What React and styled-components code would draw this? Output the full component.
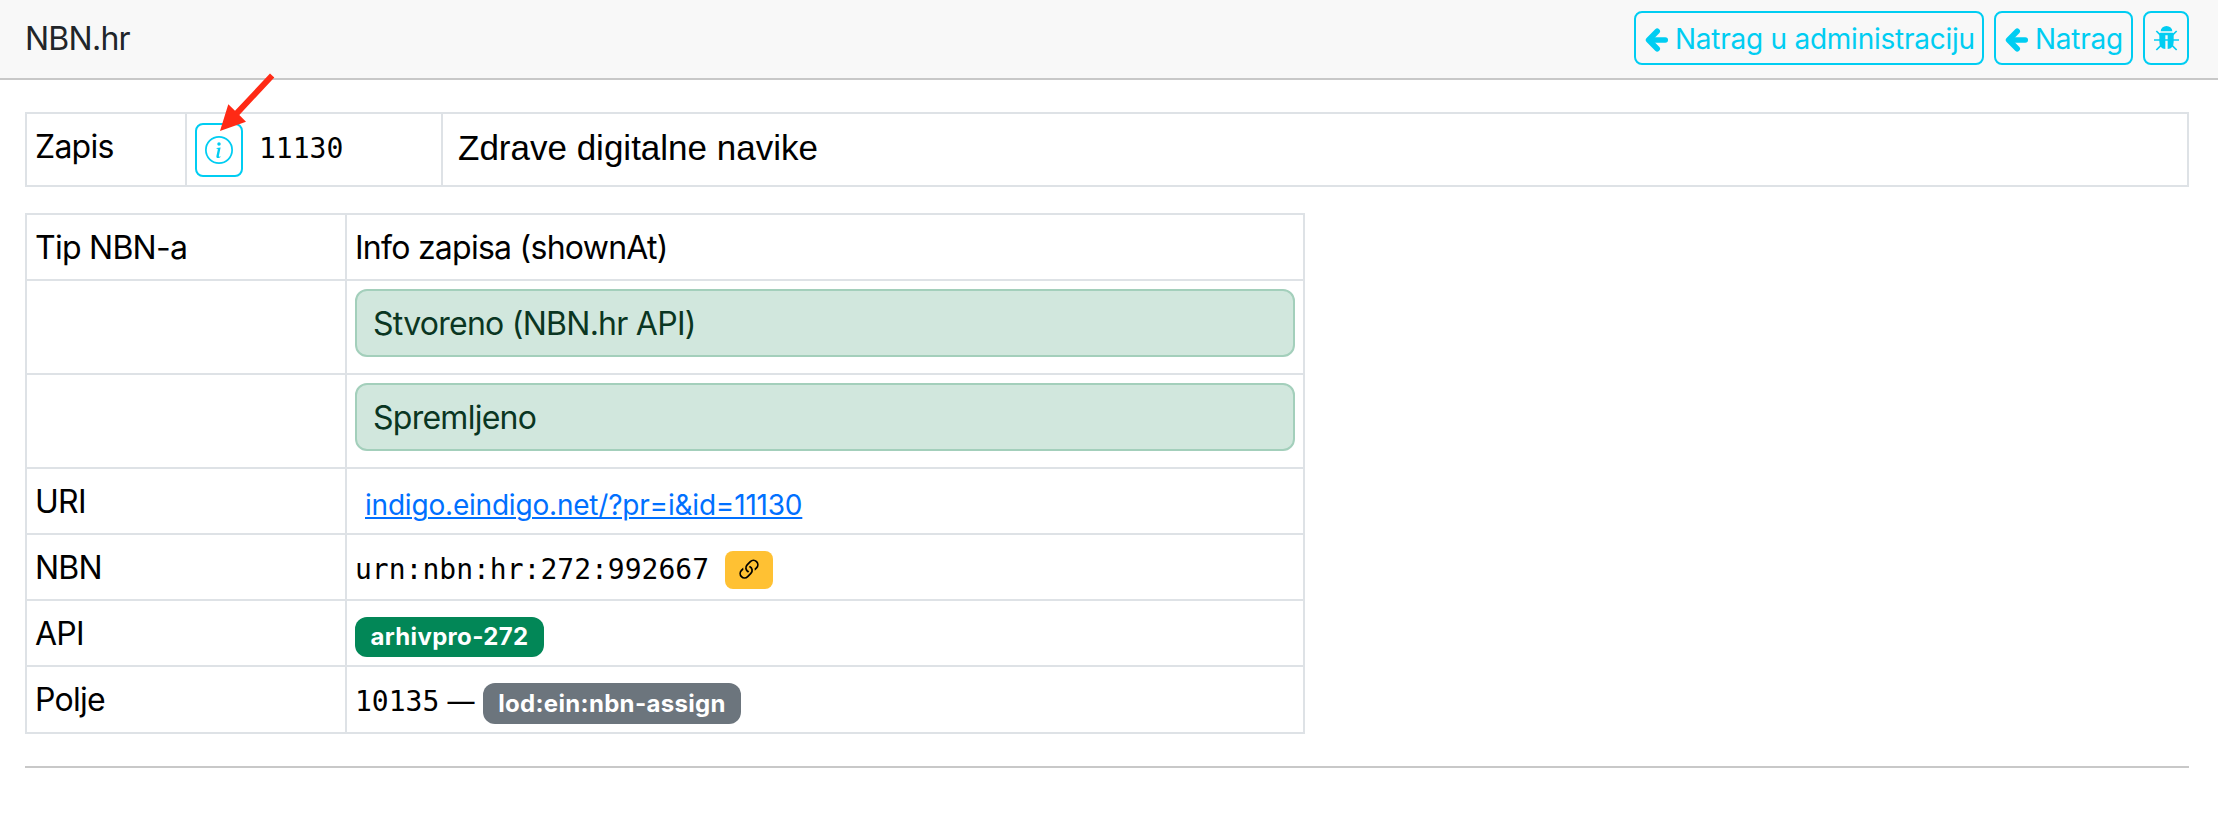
import React from "react";
import styled, { createGlobalStyle } from "styled-components";
import { BsInfoCircle, BsLink45Deg } from "react-icons/bs";

const theme = {
  cyan: "#00cdf2",
  border: "#dee2e6",
  green: "#028757",
  gray: "#6c757d",
};

const GlobalStyle = createGlobalStyle`
  * {
    box-sizing: border-box;
  }

  body {
    margin: 0;
    background: #fff;
    color: #000;
    font-family: Inter, "Liberation Sans", sans-serif;
    font-size: 32px;
    line-height: 50px;
    letter-spacing: -0.74px;
  }
`;

const Header = styled.header`
  display: flex;
  justify-content: space-between;
  align-items: center;
  height: 80px;
  padding: 0 29px 2px 25px;
  background: #f8f8f8;
  border-bottom: 2px solid #c8c8c8;
`;

const Brand = styled.div`
  padding-top: 2px;
  color: #212529;
`;

const Buttons = styled.div`
  display: flex;
  gap: 10px;
`;

const OutlineButton = styled.button`
  display: flex;
  justify-content: ${(props) => (props.$icon ? "center" : "flex-start")};
  align-items: center;
  gap: 6px;
  width: ${(props) => props.$width}px;
  height: 54px;
  padding: ${(props) => (props.$icon ? "0" : "0 0 0 9px")};
  border: 2px solid ${theme.cyan};
  border-radius: 8px;
  background: transparent;
  color: ${theme.cyan};
  font: 28px Inter, sans-serif;
  letter-spacing: -0.25px;
  white-space: nowrap;
`;

const ButtonText = styled.span`
  line-height: 28px;
  padding-top: 1px;
`;

const ArrowIcon = styled.svg`
  flex: none;
  width: 24px;
  height: 24px;
  margin-top: 4px;
`;

const BugIcon = styled.svg`
  width: 25px;
  height: 25px;
`;

const Main = styled.main`
  padding: 32px 29px 0 25px;
`;

const Table = styled.div`
  width: ${(props) => props.$width || "100%"};
  margin-bottom: ${(props) => props.$gap}px;
  border: 2px solid ${theme.border};
`;

const Row = styled.div`
  display: flex;
  height: ${(props) => props.$height || 66}px;
  border-bottom: 2px solid ${theme.border};

  &:last-child {
    border-bottom: 0;
  }
`;

const Cell = styled.div`
  display: flex;
  align-items: flex-start;
  flex: ${(props) => (props.$width ? `0 0 ${props.$width}px` : "1")};
  padding: 8px;
  border-right: 2px solid ${theme.border};
  white-space: pre;

  &:last-child {
    border-right: 0;
  }
`;

const RecordButton = styled(OutlineButton)`
  margin: 1px 16px 0 0;
`;

const Mono = styled.span`
  font-family: "DejaVu Sans Mono", monospace;
  font-size: 28px;
  letter-spacing: 0;
`;

const Title = styled.div`
  padding-left: 7px;
  font-family: "Liberation Sans", Arial, sans-serif;
  font-size: 35px;
  line-height: 52px;
  letter-spacing: 0;
`;

const Alert = styled.div`
  flex: 1;
  height: 68px;
  padding: 8px 16px;
  border: 2px solid #a3cfbb;
  border-radius: 12px;
  background: #d1e7dd;
  color: #0a3622;
`;

const Link = styled.a`
  margin: 3px 0 0 10px;
  color: #0070ff;
  font-size: 28px;
  letter-spacing: -0.2px;
  text-decoration: underline;
  text-decoration-thickness: 2px;
  text-underline-offset: 2px;
`;

const LinkButton = styled.button`
  display: flex;
  justify-content: center;
  align-items: center;
  width: 48px;
  height: 38px;
  margin: 8px 0 0 16px;
  padding: 0;
  border: 0;
  border-radius: 8px;
  background: #ffc133;
  color: #000;
`;

const Badge = styled.span`
  width: ${(props) => props.$width}px;
  height: ${(props) => props.$height}px;
  margin-top: 8px;
  border-radius: 12px;
  background: ${(props) => props.$color};
  color: #fff;
  font-size: 24px;
  font-weight: 700;
  line-height: ${(props) => props.$height}px;
  letter-spacing: 0.33px;
  text-align: center;
`;

const Field = styled.span`
  width: 128px;
`;

const Dash = styled.span`
  font-size: 27px;
`;

const Divider = styled.hr`
  height: 2px;
  margin: 0;
  border: 0;
  background: #c8c8c8;
`;

// lies over the header and the first table
const Pointer = styled.svg`
  position: absolute;
  left: 216px;
  top: 70px;
  width: 62px;
  height: 66px;
`;

const BackArrow = () => (
  <ArrowIcon viewBox="0 0 24 24" fill="none" stroke="currentColor">
    <path
      d="M12.2 3.3 3.6 12l8.6 8.7"
      strokeWidth="5.6"
      strokeLinecap="round"
      strokeLinejoin="round"
    />
    <path d="M5 12h15.2" strokeWidth="5.6" strokeLinecap="round" />
  </ArrowIcon>
);

const Bug = () => (
  <BugIcon viewBox="0 0 75 75" fill="currentColor">
    <path d="M20 16a17.5 16 0 0 1 35 0z" />
    <path d="M16 24q0-4 4-4h35q4 0 4 4v23q0 20-18 22V28h-7v41q-18-2-18-22z" />
    <path
      d="M0 42h75M7 15l14 14M68 15 54 29M7 72l14-14M68 72 54 58"
      stroke="currentColor"
      strokeWidth="5"
    />
  </BugIcon>
);

export default () => {
  return (
    <>
      <GlobalStyle />
      <Header>
        <Brand>NBN.hr</Brand>
        <Buttons>
          <OutlineButton $width={350}>
            <BackArrow />
            <ButtonText>Natrag u administraciju</ButtonText>
          </OutlineButton>
          <OutlineButton $width={139}>
            <BackArrow />
            <ButtonText>Natrag</ButtonText>
          </OutlineButton>
          <OutlineButton $width={46} $icon>
            <Bug />
          </OutlineButton>
        </Buttons>
      </Header>

      <Main>
        <Table $gap={26}>
          <Row $height={71}>
            <Cell $width={160}>Zapis</Cell>
            <Cell $width={256}>
              <RecordButton $width={48} $icon>
                <BsInfoCircle size={28} />
              </RecordButton>
              <span>
                <Mono>11130</Mono>
              </span>
            </Cell>
            <Cell>
              <Title>Zdrave digitalne navike</Title>
            </Cell>
          </Row>
        </Table>

        <Table $width="1280px" $gap={32}>
          <Row>
            <Cell $width={320}>Tip NBN-a</Cell>
            <Cell>Info zapisa (shownAt)</Cell>
          </Row>
          <Row $height={94}>
            <Cell $width={320} />
            <Cell>
              <Alert>Stvoreno (NBN.hr API)</Alert>
            </Cell>
          </Row>
          <Row $height={94}>
            <Cell $width={320} />
            <Cell>
              <Alert>Spremljeno</Alert>
            </Cell>
          </Row>
          <Row>
            <Cell $width={320}>URI</Cell>
            <Cell>
              <Link href="#">indigo.eindigo.net/?pr=i&amp;id=11130</Link>
            </Cell>
          </Row>
          <Row>
            <Cell $width={320}>NBN</Cell>
            <Cell>
              <span>
                <Mono>urn:nbn:hr:272:992667</Mono>
              </span>
              <LinkButton>
                <BsLink45Deg size={28} />
              </LinkButton>
            </Cell>
          </Row>
          <Row>
            <Cell $width={320}>API</Cell>
            <Cell>
              <Badge $width={189} $height={40} $color={theme.green}>
                arhivpro-272
              </Badge>
            </Cell>
          </Row>
          <Row $height={65}>
            <Cell $width={320}>Polje</Cell>
            <Cell>
              <Field>
                <Mono>10135</Mono> <Dash>—</Dash>
              </Field>
              <Badge $width={258} $height={41} $color={theme.gray}>
                lod:ein:nbn-assign
              </Badge>
            </Cell>
          </Row>
        </Table>
        <Divider />
      </Main>

      <Pointer viewBox="0 0 62 66" fill="#ff2a15">
        <path d="M4 61 12.3 34.3 19 40.7 54 3.5 58.3 7.5 23.3 45 30 51.8z" />
      </Pointer>
    </>
  );
};
